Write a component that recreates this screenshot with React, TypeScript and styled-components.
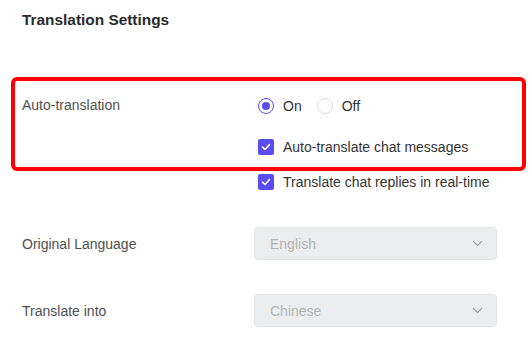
import React, { useState } from 'react';
import styled, { createGlobalStyle } from 'styled-components';

const GlobalStyle = createGlobalStyle`
  body {
    margin: 0;
    background: #ffffff;
    font-family: 'Liberation Sans', Arial, sans-serif;
  }
`;

const Page = styled.div`
  position: relative;
  width: 530px;
  height: 342px;
  padding: 0 33px 0 22px;
  box-sizing: border-box;
`;

const Title = styled.h2`
  margin: 0;
  padding-top: 10px;
  font-size: 15.4px;
  line-height: 19px;
  font-weight: 700;
  color: #2a2a2a;
`;

const Highlight = styled.div`
  position: absolute;
  left: 11px;
  top: 77px;
  width: 515px;
  height: 94px;
  box-sizing: border-box;
  border: 4px solid #ff0000;
  border-radius: 6px;
  pointer-events: none;
`;

const Row = styled.div<{ $top: number; $start?: boolean }>`
  display: grid;
  grid-template-columns: 232px 1fr;
  align-items: ${(p) => (p.$start ? 'start' : 'center')};
  margin-top: ${(p) => p.$top}px;
`;

const Label = styled.div`
  font-size: 14px;
  line-height: 20px;
  color: #505050;
`;

const Controls = styled.div`
  display: flex;
  flex-direction: column;
  padding-left: 4px;
`;

const RadioGroup = styled.div`
  display: flex;
  align-items: center;
  gap: 15px;
  height: 20px;
  margin-top: 1px;
`;

const Option = styled.label`
  display: flex;
  align-items: center;
  gap: 9px;
  font-size: 14px;
  line-height: 20px;
  color: #333;
  cursor: pointer;
`;

const RadioDot = styled.span<{ $checked: boolean }>`
  width: 16px;
  height: 16px;
  box-sizing: border-box;
  border-radius: 50%;
  border: 1px solid ${(p) => (p.$checked ? '#5b4cf0' : '#dcdcdc')};
  display: flex;
  align-items: center;
  justify-content: center;
  &::after {
    content: '';
    width: 8px;
    height: 8px;
    border-radius: 50%;
    background: #5b4cf0;
    display: ${(p) => (p.$checked ? 'block' : 'none')};
  }
`;

const CheckRow = styled(Option)<{ $top: number }>`
  margin-top: ${(p) => p.$top}px;
`;

const Box = styled.span`
  width: 16px;
  height: 16px;
  border-radius: 2px;
  background: #5b4cf0;
  display: flex;
  align-items: center;
  justify-content: center;
`;

const Select = styled.div`
  height: 33px;
  box-sizing: border-box;
  border: 1px solid #e2e3e6;
  border-radius: 4px;
  background: #ecedef;
  display: flex;
  align-items: center;
  justify-content: space-between;
  padding: 0 13px 0 15px;
  font-size: 14px;
  color: #b3b3b3;
`;

const Check = () => (
  <Box>
    <svg width="12" height="12" viewBox="0 0 12 12">
      <path d="M2.5 6.2 L5 8.5 L9.5 3.5" fill="none" stroke="#fff" strokeWidth="1.6" strokeLinecap="round" strokeLinejoin="round" />
    </svg>
  </Box>
);

const Chevron = () => (
  <svg width="11" height="7" viewBox="0 0 11 7">
    <path d="M1 1.2 L5.5 5.5 L10 1.2" fill="none" stroke="#9a9a9a" strokeWidth="1.1" />
  </svg>
);

export default function App() {
  const [on, setOn] = useState(true);

  return (
    <>
      <GlobalStyle />
      <Page>
        <Title>Translation Settings</Title>

        <Row $top={66} $start>
          <Label>Auto-translation</Label>
          <Controls>
            <RadioGroup>
              <Option onClick={() => setOn(true)}>
                <RadioDot $checked={on} />
                On
              </Option>
              <Option onClick={() => setOn(false)}>
                <RadioDot $checked={!on} />
                Off
              </Option>
            </RadioGroup>
            <CheckRow $top={21}>
              <Check />
              Auto-translate chat messages
            </CheckRow>
            <CheckRow $top={15}>
              <Check />
              Translate chat replies in real-time
            </CheckRow>
          </Controls>
        </Row>

        <Row $top={35}>
          <Label>Original Language</Label>
          <Select>
            English
            <Chevron />
          </Select>
        </Row>

        <Row $top={34}>
          <Label>Translate into</Label>
          <Select>
            Chinese
            <Chevron />
          </Select>
        </Row>

        <Highlight />
      </Page>
    </>
  );
}
